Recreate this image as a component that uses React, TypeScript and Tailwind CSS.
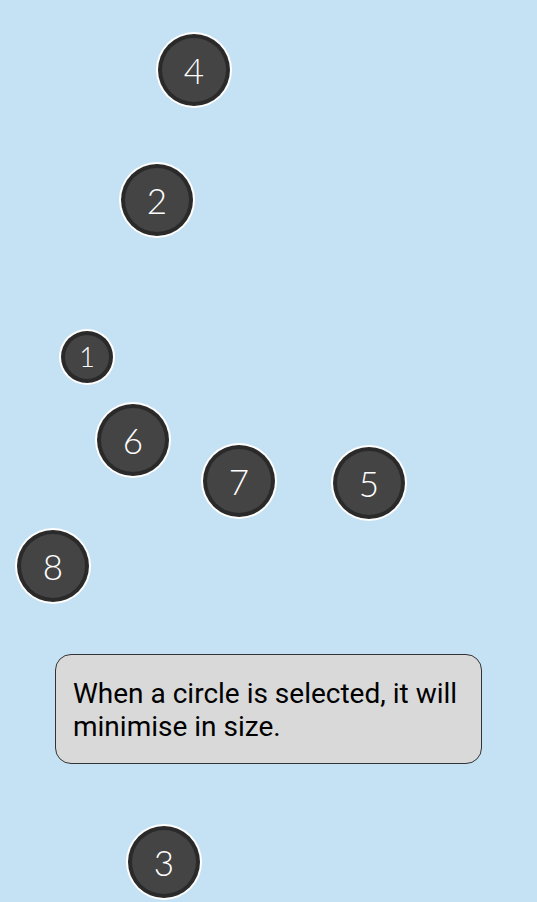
import React from "react";

type C = { n: string; x: number; y: number; d: number; fs: number };

const circles: C[] = [
  { n: "4", x: 194, y: 70, d: 76, fs: 35 },
  { n: "2", x: 157, y: 200, d: 76, fs: 35 },
  { n: "1", x: 87, y: 357, d: 56, fs: 27 },
  { n: "6", x: 133, y: 440, d: 76, fs: 35 },
  { n: "7", x: 239, y: 481, d: 76, fs: 35 },
  { n: "5", x: 369, y: 483, d: 76, fs: 35 },
  { n: "8", x: 53, y: 566, d: 76, fs: 35 },
  { n: "3", x: 164, y: 862, d: 76, fs: 35 },
];

export default function App() {
  return (
    <div className="relative w-[537px] h-[902px] overflow-hidden bg-[#c5e2f4]">
      {circles.map((c) => (
        <div
          key={c.n}
          className="absolute rounded-full bg-white p-[2px]"
          style={{ left: c.x - c.d / 2, top: c.y - c.d / 2, width: c.d, height: c.d }}
        >
          <div className="w-full h-full rounded-full bg-[#2a2a2a] p-[4px]">
            <div
              className="w-full h-full rounded-full bg-[#444444] flex items-center justify-center text-white"
              style={{ fontSize: c.fs, fontFamily: "Lato, 'Open Sans', sans-serif", fontWeight: 300 }}
            >
              {c.n}
            </div>
          </div>
        </div>
      ))}
      <div className="absolute left-[55px] top-[654px] w-[427px] h-[110px] rounded-[16px] border border-[#333] bg-[#d9d9d9] px-[17px] pt-[22px] text-[28px] leading-[33px] text-black font-['Roboto',sans-serif]">
        When a circle is selected, it will minimise in size.
      </div>
    </div>
  );
}
